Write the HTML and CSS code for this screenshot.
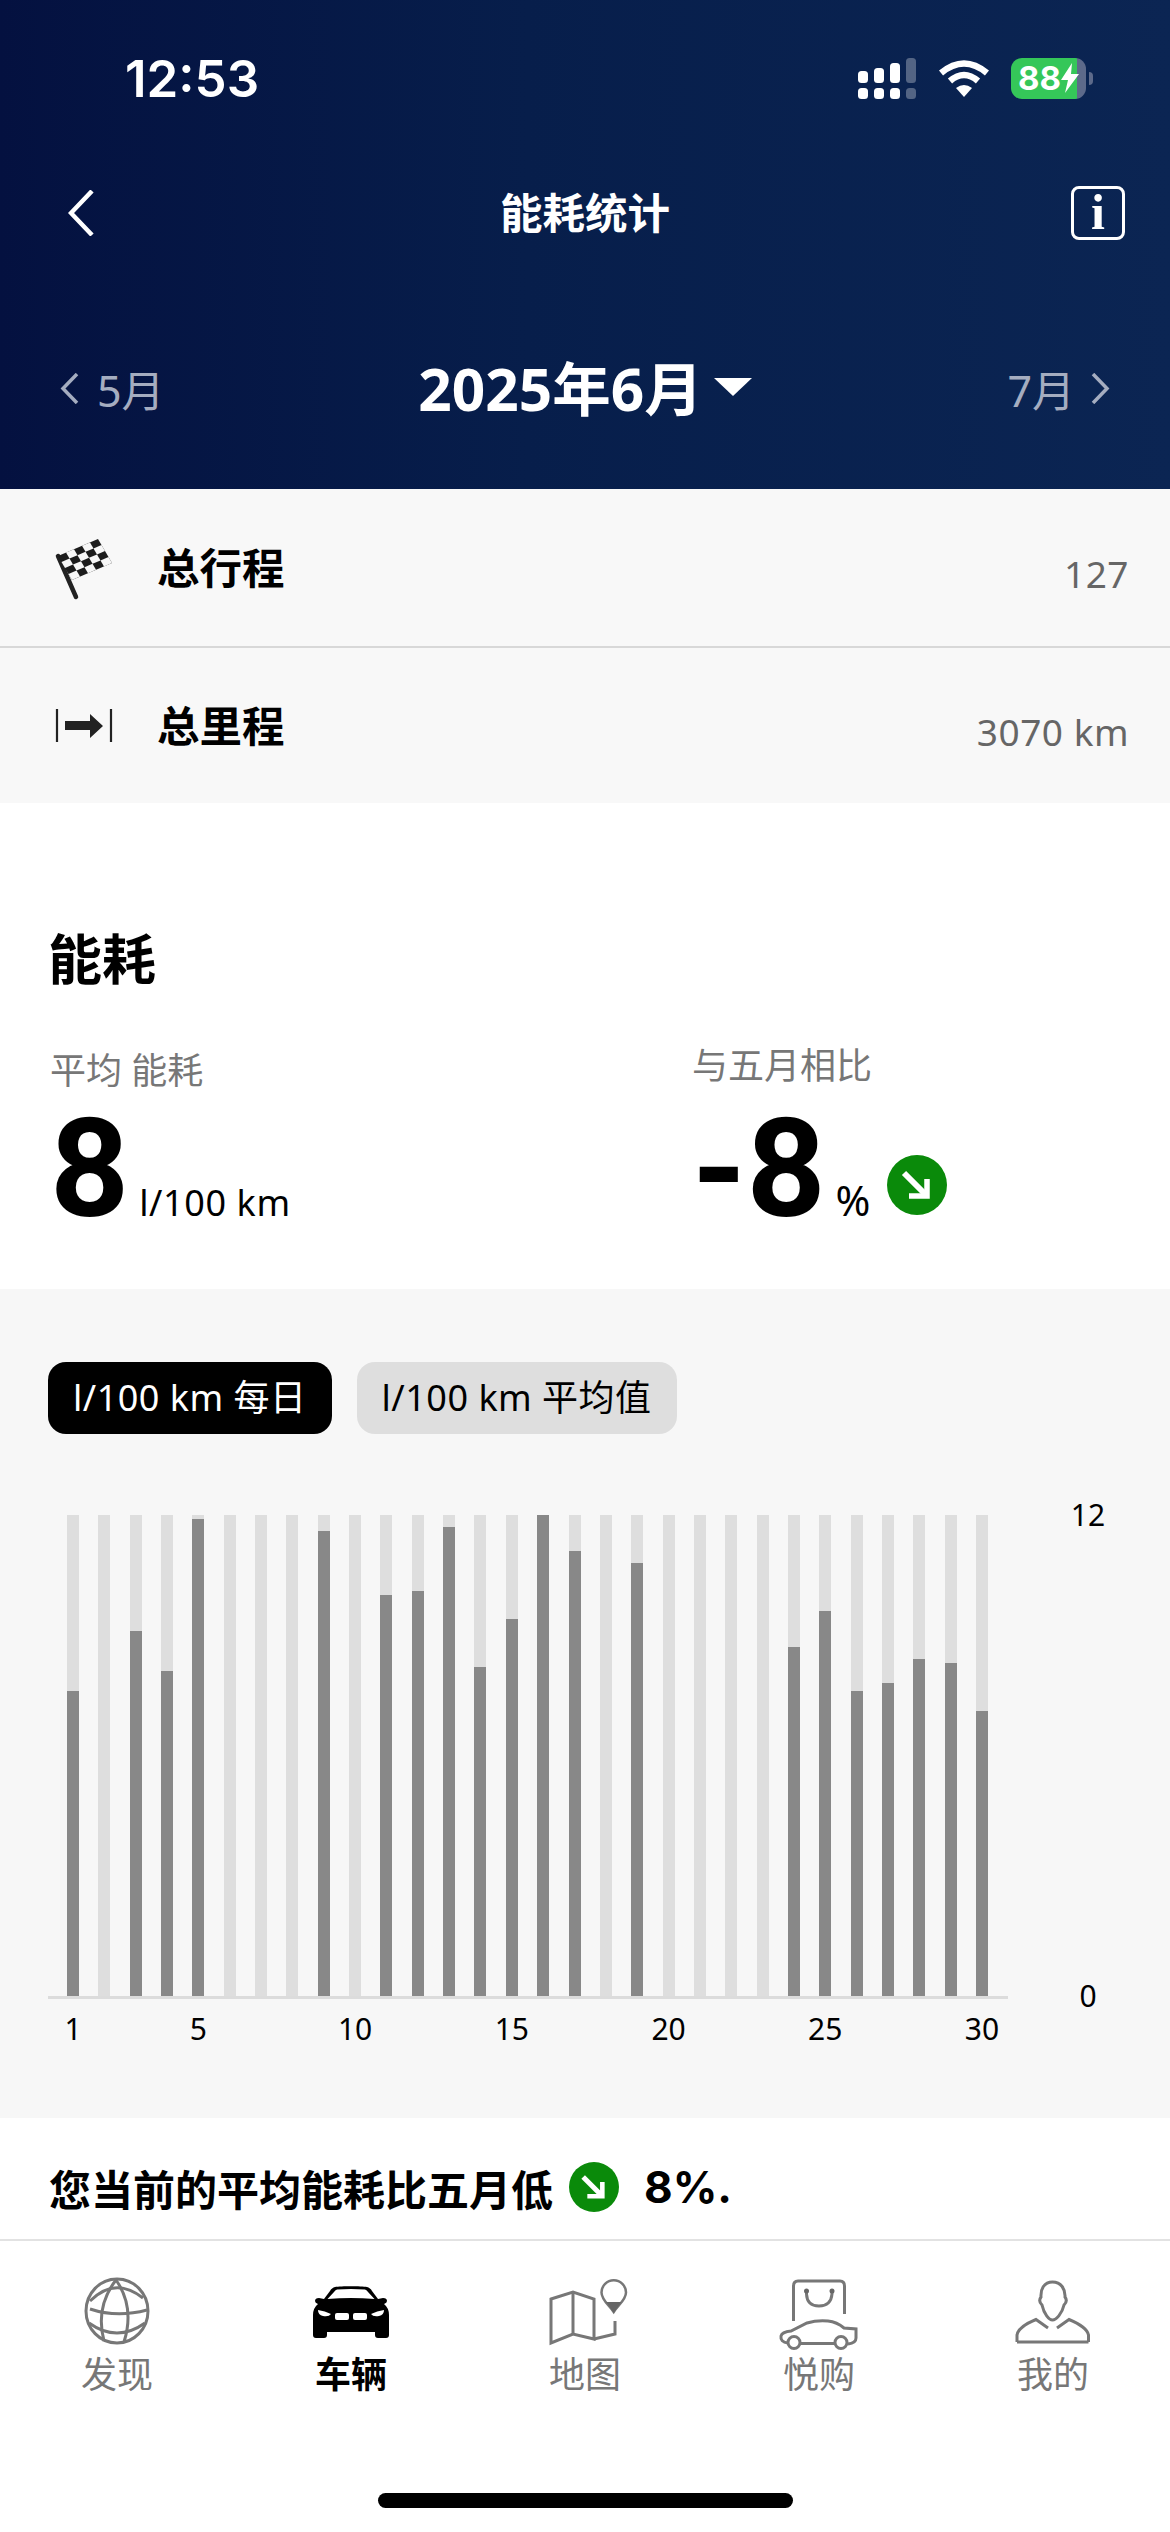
FILE: index.html
```html
<!DOCTYPE html>
<html lang="zh">

<head>
    <meta charset="utf-8">
    <title>能耗统计</title>
    <link rel="stylesheet" href="styles.css">
</head>

<body>
    <svg class="defs" width="0" height="0">
        <symbol id="down-badge" viewBox="0 0 60 60">
            <circle cx="30" cy="30" r="30" fill="#0a8a0a" />
            <path d="M17 18 L38 39" fill="none" stroke="#fff" stroke-width="6" />
            <path d="M40 24 V41 H22" fill="none" stroke="#fff" stroke-width="5.5" />
        </symbol>
    </svg>

    <div class="page">
        <div class="header">
            <div class="status">
                <span class="time">12:53</span>
                <div class="status-icons">
                    <svg class="signal" width="58" height="41" viewBox="0 0 58 41">
                        <rect x="0" y="30" width="10" height="11" rx="3.5" fill="#fff" />
                        <rect x="16" y="30" width="10" height="11" rx="3.5" fill="#fff" />
                        <rect x="32" y="30" width="10" height="11" rx="3.5" fill="#fff" />
                        <rect x="48" y="30" width="10" height="11" rx="3.5" fill="#fff" opacity=".3" />
                        <rect x="0" y="13" width="10" height="12" rx="3.5" fill="#fff" />
                        <rect x="16" y="10" width="10" height="15" rx="3.5" fill="#fff" />
                        <rect x="32" y="5" width="10" height="20" rx="3.5" fill="#fff" />
                        <rect x="48" y="0" width="10" height="25" rx="3.5" fill="#fff" opacity=".3" />
                    </svg>
                    <svg class="wifi" width="50" height="37" viewBox="0 0 50 37">
                        <path d="M2 13 Q25 -6 48 13" fill="none" stroke="#fff" stroke-width="6.5" />
                        <path d="M11 21 Q25 9 39 21" fill="none" stroke="#fff" stroke-width="6.5" />
                        <path d="M25 37 L17 28 Q25 22 33 28 Z" fill="#fff" />
                    </svg>
                    <div class="battery"><span>88</span>
                        <svg width="18" height="30" viewBox="0 0 18 30">
                            <path d="M11 0 L0 17 H7 L4 30 L18 11 H10 Z" fill="#fff" />
                        </svg>
                    </div>
                    <div class="battery-nub"></div>
                </div>
            </div>

            <div class="topbar">
                <svg class="back" width="26" height="46" viewBox="0 0 26 46">
                    <path d="M24 1 L3 23 L24 45" fill="none" stroke="#fff" stroke-width="4.5" />
                </svg>
                <h1 class="title">能耗统计</h1>
                <div class="info">i</div>
            </div>

            <div class="months">
                <div class="month-side">
                    <svg width="19" height="31" viewBox="0 0 19 31">
                        <path d="M17 1 L3 15.5 L17 30" fill="none" stroke="#a5adc0" stroke-width="3.5" />
                    </svg>
                    <span>5月</span>
                </div>
                <div class="month-now">
                    <span>2025年6月</span>
                    <div class="caret"></div>
                </div>
                <div class="month-side month-next">
                    <span>7月</span>
                    <svg width="19" height="31" viewBox="0 0 19 31">
                        <path d="M2 1 L16 15.5 L2 30" fill="none" stroke="#a5adc0" stroke-width="3.5" />
                    </svg>
                </div>
            </div>
        </div>

        <div class="totals">
            <div class="total-row">
                <svg class="total-icon" width="64" height="70" viewBox="50 535 64 70">
                    <path d="M58 558 L76 599" stroke="#222" stroke-width="4.5" stroke-linecap="round" />
                    <g transform="matrix(8 -3.4 3.5 6 58 558)">
                        <rect width="5" height="4" fill="#1c1c1c" />
                        <rect x="1" y="0" width="1" height="1" fill="#f7f7f7" />
                        <rect x="3" y="0" width="1" height="1" fill="#f7f7f7" />
                        <rect x="0" y="1" width="1" height="1" fill="#f7f7f7" />
                        <rect x="2" y="1" width="1" height="1" fill="#f7f7f7" />
                        <rect x="4" y="1" width="1" height="1" fill="#f7f7f7" />
                        <rect x="1" y="2" width="1" height="1" fill="#f7f7f7" />
                        <rect x="3" y="2" width="1" height="1" fill="#f7f7f7" />
                        <rect x="0" y="3" width="1" height="1" fill="#f7f7f7" />
                        <rect x="2" y="3" width="1" height="1" fill="#f7f7f7" />
                        <rect x="4" y="3" width="1" height="1" fill="#f7f7f7" />
                    </g>
                </svg>
                <span class="total-label">总行程</span>
                <span class="total-value">127</span>
            </div>
            <div class="total-row">
                <svg class="total-icon" width="64" height="70" viewBox="50 694 64 70">
                    <path d="M57 712 V745 M111 712 V745" stroke="#222" stroke-width="2.2" />
                    <path d="M65 724 H90 V717 L103 729 L90 741 V733 H65 Z" fill="#222" />
                </svg>
                <span class="total-label">总里程</span>
                <span class="total-value">3070 km</span>
            </div>
        </div>

        <div class="energy">
            <h2 class="energy-title">能耗</h2>
            <div class="stats">
                <div class="stat">
                    <div class="stat-label">平均 能耗</div>
                    <div class="stat-value"><b>8</b><span>l/100 km</span></div>
                </div>
                <div class="stat stat-compare">
                    <div class="stat-label">与五月相比</div>
                    <div class="stat-value"><b>-8</b><span>%</span>
                        <svg class="badge-big" width="60" height="60"><use href="#down-badge" /></svg>
                    </div>
                </div>
            </div>
        </div>

        <div class="chart-panel">
            <div class="pills">
                <div class="pill pill-on">l/100 km 每日</div>
                <div class="pill">l/100 km 平均值</div>
            </div>
            <div class="chart">
                <div class="plot">
                    <div class="bars">
                        <div class="bar"><i style="height:63.4%"></i></div>
                        <div class="bar"></div>
                        <div class="bar"><i style="height:75.9%"></i></div>
                        <div class="bar"><i style="height:67.6%"></i></div>
                        <div class="bar"><i style="height:99.2%"></i></div>
                        <div class="bar"></div>
                        <div class="bar"></div>
                        <div class="bar"></div>
                        <div class="bar"><i style="height:96.7%"></i></div>
                        <div class="bar"></div>
                        <div class="bar"><i style="height:83.4%"></i></div>
                        <div class="bar"><i style="height:84.2%"></i></div>
                        <div class="bar"><i style="height:97.5%"></i></div>
                        <div class="bar"><i style="height:68.4%"></i></div>
                        <div class="bar"><i style="height:78.4%"></i></div>
                        <div class="bar"><i style="height:100%"></i></div>
                        <div class="bar"><i style="height:92.5%"></i></div>
                        <div class="bar"></div>
                        <div class="bar"><i style="height:90%"></i></div>
                        <div class="bar"></div>
                        <div class="bar"></div>
                        <div class="bar"></div>
                        <div class="bar"></div>
                        <div class="bar"><i style="height:72.6%"></i></div>
                        <div class="bar"><i style="height:80%"></i></div>
                        <div class="bar"><i style="height:63.4%"></i></div>
                        <div class="bar"><i style="height:65.1%"></i></div>
                        <div class="bar"><i style="height:70.1%"></i></div>
                        <div class="bar"><i style="height:69.2%"></i></div>
                        <div class="bar"><i style="height:59.3%"></i></div>
                    </div>
                    <div class="days">
                        <span>1</span><span></span><span></span><span></span><span>5</span>
                        <span></span><span></span><span></span><span></span><span>10</span>
                        <span></span><span></span><span></span><span></span><span>15</span>
                        <span></span><span></span><span></span><span></span><span>20</span>
                        <span></span><span></span><span></span><span></span><span>25</span>
                        <span></span><span></span><span></span><span></span><span>30</span>
                    </div>
                </div>
                <div class="scale"><span>12</span><span>0</span></div>
            </div>
        </div>

        <div class="summary">
            <span class="summary-text">您当前的平均能耗比五月低</span>
            <svg class="badge-small" width="50" height="50"><use href="#down-badge" /></svg>
            <span class="summary-num">8%.</span>
        </div>

        <div class="tabbar">
            <div class="tab">
                <svg class="tab-icon" width="90" height="76" viewBox="-5 0 90 76">
                    <g fill="none" stroke="#777" stroke-width="3">
                        <ellipse cx="40" cy="34" rx="31" ry="32" />
                        <path d="M39 3 Q18 30 27 64" />
                        <path d="M39 3 Q58 30 47 65" />
                        <path d="M13 24 Q38 -1 66 21" />
                        <path d="M13 32 Q40 41 70 33" />
                        <path d="M12 46 Q40 66 68 46" />
                    </g>
                </svg>
                <span>发现</span>
            </div>
            <div class="tab tab-on">
                <svg class="tab-icon" width="90" height="76" viewBox="-5 0 90 76">
                    <path d="M24 10 C30 9 50 9 56 10 C58 10.5 60 12 61 14 L67 22 L72 21 Q76 21 76 24 Q76 26 73 27 Q78 31 78 38 L78 58 Q78 61 75 61 L67 61 Q64 61 64 58 L64 55 L16 55 L16 58 Q16 61 13 61 L5 61 Q2 61 2 58 L2 38 Q2 31 7 27 Q4 26 4 24 Q4 21 8 21 L13 22 L19 14 C20 12 22 10.5 24 10 Z" fill="#000" />
                    <path d="M26 12.5 Q40 11.5 54 12.5 Q56 13 57 15 L63.5 22 Q40 20 16.5 22 L23 15 Q24 13 26 12.5 Z" fill="#fff" />
                    <path d="M7 33 Q14 34 20 37 Q18 40 12 39 Q7 38 7 33 Z" fill="#fff" />
                    <path d="M73 33 Q66 34 60 37 Q62 40 68 39 Q73 38 73 33 Z" fill="#fff" />
                    <rect x="24" y="36" width="14" height="7" rx="2" fill="#fff" />
                    <rect x="42" y="36" width="14" height="7" rx="2" fill="#fff" />
                </svg>
                <span>车辆</span>
            </div>
            <div class="tab">
                <svg class="tab-icon" width="90" height="76" viewBox="-5 0 90 76">
                    <g fill="none" stroke="#777" stroke-width="3">
                        <path d="M6 22 L28 15 L49 22 V62 L28 57 L6 66 Z" />
                        <path d="M28 15 V57" />
                        <path d="M49 62 L70 57 V44" />
                        <path d="M68.7 35 C64 28 56.5 23 56.5 15.5 A12.2 12.2 0 0 1 81 15.5 C81 23 73 28 68.7 35 Z" stroke-width="2.5" />
                    </g>
                    <path d="M61 25 H76.5 L68.7 36 Z" fill="#666" />
                </svg>
                <span>地图</span>
            </div>
            <div class="tab">
                <svg class="tab-icon" width="90" height="76" viewBox="-5 0 90 76">
                    <g fill="none" stroke="#777" stroke-width="3">
                        <path d="M14.5 44 V9 Q14.5 4 19 4 H61 Q65.5 4 65.5 9 V37" />
                        <path d="M27.5 14 V17 Q28 29 40 29 Q52 29 53 17 V14" />
                        <path d="M9 66 Q1 65 2 59 Q3 55 12 54 L28 46 Q38 43 49 44 Q58 45 65 51 L77 52 V61 Q77 66 69 67" />
                        <path d="M22 66.5 H55" />
                        <circle cx="15" cy="65.5" r="6" />
                        <circle cx="62" cy="65.5" r="6" />
                    </g>
                    <circle cx="27.5" cy="14" r="2.5" fill="#666" />
                    <circle cx="53" cy="14" r="2.5" fill="#666" />
                </svg>
                <span>悦购</span>
            </div>
            <div class="tab">
                <svg class="tab-icon" width="90" height="76" viewBox="-5 0 90 76">
                    <g fill="none" stroke="#777" stroke-width="3">
                        <path d="M39.5 5 C31 5 27.5 12 28 20 Q25 24 29 28 C31 37 36 43 39.5 43 C43 43 49 37 51 28 Q55 24 52 20 C52.5 12 48 5 39.5 5 Z" />
                        <path d="M4 65 V58 Q5 50 23 42.5 L35 51" />
                        <path d="M75.5 65 V58 Q74 50 56 42.5 L44 51" />
                        <path d="M4 65 H75.5" />
                    </g>
                </svg>
                <span>我的</span>
            </div>
        </div>

        <div class="home-bar"></div>
    </div>
</body>

</html>
```

FILE: styles.css
```css
* {
    box-sizing: border-box;
    margin: 0;
    padding: 0;
}

body {
    background: #fff;
    font-family: "Noto Sans", "Noto Sans CJK SC", sans-serif;
    color: #000;
}

.defs {
    position: absolute;
}

.page {
    width: 1170px;
    height: 2532px;
    overflow: hidden;
}

/* header */
.header {
    height: 489px;
    background: linear-gradient(90deg, #041140 0%, #071e4b 45%, #0b2553 100%);
    color: #fff;
}

.status {
    height: 156px;
    padding: 0 77px 0 125px;
    display: flex;
    align-items: center;
    justify-content: space-between;
}

.time {
    font-family: Inter, sans-serif;
    font-size: 51px;
    font-weight: 600;
}

.status-icons {
    display: flex;
    align-items: center;
}

.wifi {
    margin-left: 23px;
}

.battery {
    margin-left: 22px;
    width: 75px;
    height: 41px;
    border-radius: 11px;
    background: linear-gradient(90deg, #35c759 88%, #5d6a8a 88%);
    padding-left: 7px;
    display: flex;
    align-items: center;
    font-family: Inter, sans-serif;
    font-size: 33px;
    font-weight: 700;
}

.battery-nub {
    margin-left: 3px;
    width: 4px;
    height: 13px;
    border-radius: 0 4px 4px 0;
    background: #5d6a8a;
}

.topbar {
    height: 114px;
    padding: 0 45px;
    display: grid;
    grid-template-columns: 1fr auto 1fr;
    align-items: center;
}

.back {
    margin-left: 23px;
}

.title {
    font-size: 42.5px;
    font-weight: 700;
    line-height: 60px;
}

.info {
    justify-self: end;
    width: 54px;
    height: 54px;
    border: 3px solid #fff;
    border-radius: 8px;
    font-family: "Liberation Serif", serif;
    font-size: 50px;
    font-weight: 700;
    line-height: 47px;
    text-align: center;
}

.months {
    margin-top: 61px;
    height: 114px;
    padding: 0 60px;
    display: grid;
    grid-template-columns: 1fr auto 1fr;
    align-items: center;
}

.month-side {
    display: flex;
    align-items: center;
    gap: 18px;
    font-size: 43px;
    color: #a5adc0;
}

.month-next {
    justify-content: flex-end;
    gap: 16px;
}

.month-now {
    display: flex;
    align-items: center;
    gap: 11px;
    margin-top: -6px;
    font-size: 58.5px;
    font-weight: 700;
}

.caret {
    width: 0;
    height: 0;
    margin-top: 4px;
    border-left: 19px solid transparent;
    border-right: 19px solid transparent;
    border-top: 18px solid #fff;
}

/* totals */
.totals {
    background: #f8f8f8;
}

.total-row {
    height: 157px;
    padding: 0 41px 0 50px;
    display: flex;
    align-items: center;
}

.total-row + .total-row {
    border-top: 2px solid #d8d8d8;
}

.total-icon {
    margin-right: 43px;
}

.total-label {
    padding-bottom: 5px;
    font-size: 42.5px;
    font-weight: 700;
}

.total-value {
    margin-left: auto;
    padding-top: 12px;
    font-size: 37px;
    letter-spacing: .5px;
    color: #666;
}

/* energy */
.energy {
    height: 486px;
    padding: 120px 0 0 48px;
}

.energy-title {
    font-size: 54px;
    font-weight: 700;
    line-height: 72px;
}

.stats {
    display: flex;
}

.stat {
    flex: none;
    width: 642px;
    padding: 54px 0 0 2px;
}

.stat-compare {
    padding-top: 49px;
}

.stat-label {
    font-size: 36px;
    line-height: 44px;
    color: #777;
}

.stat-value {
    display: flex;
    align-items: baseline;
    margin-top: 16px;
    height: 120px;
    line-height: 120px;
}

.stat-compare .stat-value {
    margin-top: 21px;
}

.stat-value b {
    font-family: Roboto, sans-serif;
    font-size: 138px;
    font-weight: 700;
}

.stat-value span {
    margin-left: 10px;
    font-size: 36px;
    letter-spacing: .6px;
}

.stat-compare .stat-value span {
    font-size: 42px;
    letter-spacing: 0;
}

.badge-big {
    align-self: flex-end;
    margin: 0 0 14px 17px;
}

/* chart */
.chart-panel {
    height: 829px;
    padding: 73px 0 0 48px;
    background: #f7f7f7;
}

.pills {
    display: flex;
    gap: 25px;
}

.pill {
    height: 72px;
    padding: 0 25px;
    border-radius: 18px;
    background: #dedede;
    font-size: 36px;
    letter-spacing: .5px;
    line-height: 72px;
    white-space: nowrap;
}

.pill-on {
    background: #000;
    color: #fff;
}

.chart {
    margin-top: 81px;
    display: flex;
}

.plot {
    width: 960px;
}

.bars {
    height: 484px;
    padding: 0 20px 0 19px;
    border-bottom: 3px solid #dcdcdc;
    display: flex;
    justify-content: space-between;
    align-items: flex-end;
}

.bar {
    width: 12px;
    height: 100%;
    background: #dedede;
    display: flex;
    align-items: flex-end;
}

.bar i {
    display: block;
    width: 100%;
    background: #888;
}

.days {
    margin-top: 10px;
    padding: 0 20px 0 19px;
    display: flex;
    justify-content: space-between;
    font-size: 30px;
    line-height: 40px;
}

.days span {
    width: 12px;
    display: flex;
    justify-content: center;
}

.scale {
    width: 160px;
    height: 521px;
    margin-top: -20px;
    display: flex;
    flex-direction: column;
    justify-content: space-between;
    text-align: center;
    font-size: 30px;
    line-height: 40px;
}

/* summary */
.summary {
    height: 121px;
    padding: 17px 0 0 49px;
    display: flex;
    align-items: center;
}

.summary-text {
    font-size: 42px;
    font-weight: 700;
}

.badge-small {
    margin-left: 16px;
}

.summary-num {
    margin-left: 25px;
    font-family: Inter, sans-serif;
    font-size: 44px;
    font-weight: 700;
}

/* tabs */
.tabbar {
    border-top: 2px solid #e2e2e2;
    padding-top: 36px;
    display: grid;
    grid-template-columns: repeat(5, 234px);
}

.tab {
    display: flex;
    flex-direction: column;
    align-items: center;
    font-size: 36px;
    line-height: 50px;
    color: #777;
}

.tab-on {
    color: #000;
    font-weight: 700;
}

.tab-icon {
    display: block;
    margin-bottom: -3px;
}

.home-bar {
    width: 415px;
    height: 15px;
    margin: 93px auto 0;
    border-radius: 8px;
    background: #000;
}
```
